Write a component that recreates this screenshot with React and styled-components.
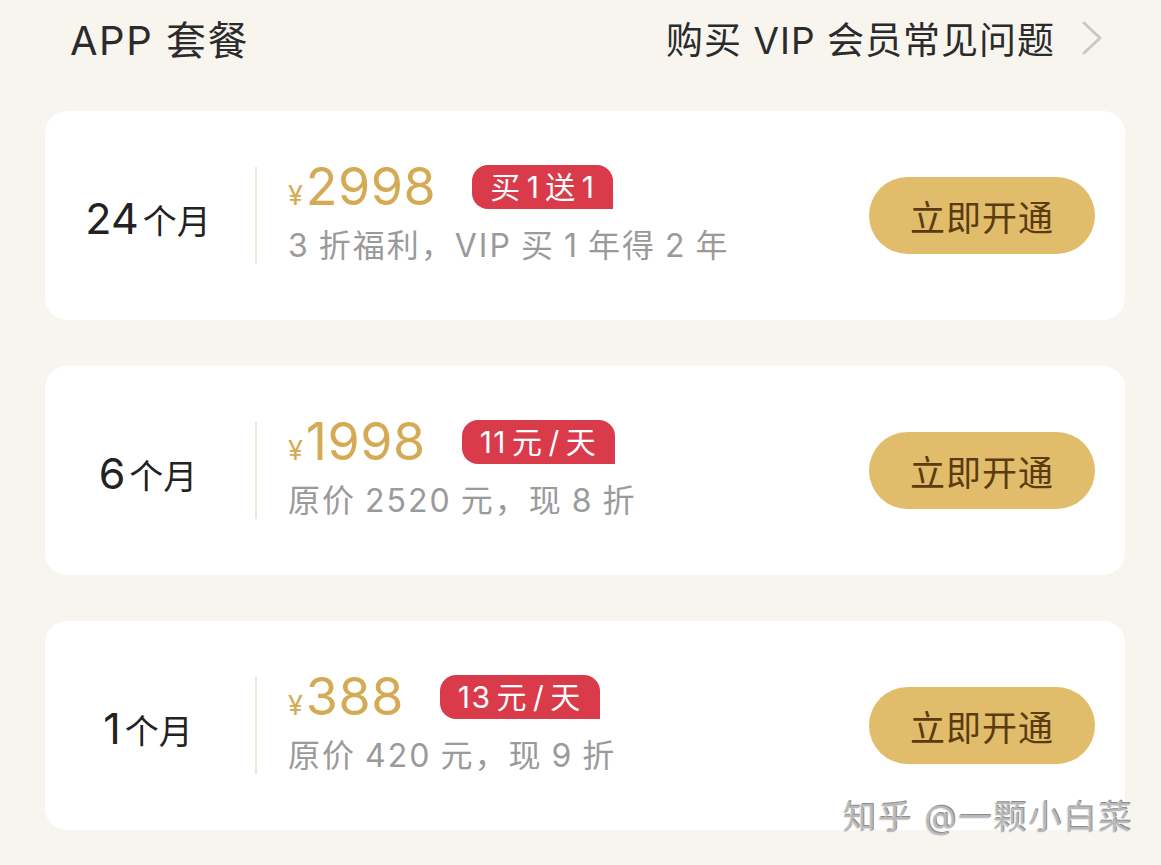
import React from 'react';
import styled, { createGlobalStyle } from 'styled-components';

const GlobalStyle = createGlobalStyle`
  html, body {
    margin: 0;
    padding: 0;
    background: #f8f5ef;
  }
  body {
    font-family: Inter, "Noto Sans CJK SC", sans-serif;
  }
`;

const Page = styled.div`
  width: 1161px;
  height: 865px;
  box-sizing: border-box;
  padding: 0 36px 0 45px;
  background: #f8f5ef;
  position: relative;
  overflow: hidden;
`;

const Header = styled.div`
  display: flex;
  align-items: center;
  justify-content: space-between;
  height: 76px;
  padding: 0 22px 0 25px;
  margin-bottom: 35px;
`;

const Title = styled.h1`
  margin: 0;
  font-size: 40px;
  font-weight: 400;
  color: #2b2b2b;
  letter-spacing: 1.5px;
`;

const FaqLink = styled.a`
  display: flex;
  align-items: center;
  gap: 26px;
  font-size: 37px;
  color: #2b2b2b;
  text-decoration: none;
  letter-spacing: 1px;
`;

const CardList = styled.div`
  display: flex;
  flex-direction: column;
  gap: 46px;
`;

const Card = styled.div`
  display: flex;
  align-items: center;
  height: 209px;
  background: #ffffff;
  border-radius: 22px;
`;

const Period = styled.div`
  width: 210px;
  display: flex;
  justify-content: center;
  align-items: baseline;
  color: #222;
  padding-top: 4px;
  padding-right: 4px;
  box-sizing: border-box;
`;

const PeriodNum = styled.span`
  font-size: 43px;
`;

const PeriodUnit = styled.span`
  font-size: 34px;
  margin-left: 4px;
`;

const Divider = styled.div`
  width: 2px;
  height: 97px;
  background: #efe6d2;
`;

const Info = styled.div`
  flex: 1;
  padding-left: 31px;
  display: flex;
  flex-direction: column;
  gap: 7px;
  margin-top: -4px;
`;

const PriceRow = styled.div`
  display: flex;
  align-items: center;
  gap: 36px;
`;

const Price = styled.div`
  color: #d4aa55;
  display: flex;
  align-items: baseline;
  line-height: 1;
`;

const Yen = styled.span`
  font-size: 27px;
  margin-right: 3px;
`;

const Amount = styled.span`
  font-size: 52px;
  letter-spacing: 0.5px;
`;

const Badge = styled.span`
  background: #d93b4b;
  color: #fff;
  font-size: 30px;
  line-height: 44px;
  height: 44px;
  padding: 0 18px;
  border-radius: 16px 16px 0 16px;
  letter-spacing: 1.5px;
  word-spacing: -5px;
`;

const Desc = styled.div`
  font-size: 32px;
  color: #9a9a9a;
  letter-spacing: 2px;
  word-spacing: -2px;
`;

const OpenButton = styled.button`
  width: 226px;
  height: 77px;
  margin-right: 30px;
  border: none;
  border-radius: 39px;
  background: #e1bc6a;
  color: #5a3b12;
  font-family: "Noto Sans CJK SC", sans-serif;
  font-size: 35px;
  letter-spacing: 1px;
  cursor: pointer;
`;

const Watermark = styled.div`
  position: absolute;
  right: 28px;
  bottom: 26px;
  font-size: 33px;
  color: #b8b8b8;
  text-shadow: -1px 1px 0 #ebebeb, 1px -1px 0 #8c8c8c;
  letter-spacing: 2px;
`;

const Chevron = () => (
  <svg width="22" height="34" viewBox="0 0 22 34" fill="none">
    <path d="M3 2 L19 17 L3 32" stroke="#c8c8c8" strokeWidth="3" strokeLinecap="round" strokeLinejoin="round" />
  </svg>
);

const plans = [
  { num: '24', price: '2998', badge: '买 1 送 1', desc: '3 折福利，VIP 买 1 年得 2 年' },
  { num: '6', price: '1998', badge: '11 元 / 天', desc: '原价 2520 元，现 8 折' },
  { num: '1', price: '388', badge: '13 元 / 天', desc: '原价 420 元，现 9 折' },
];

const App = () => (
  <Page>
    <GlobalStyle />
    <Header>
      <Title>APP 套餐</Title>
      <FaqLink href="#">
        购买 VIP 会员常见问题
        <Chevron />
      </FaqLink>
    </Header>
    <CardList>
      {plans.map(plan => (
        <Card key={plan.num}>
          <Period>
            <PeriodNum>{plan.num}</PeriodNum>
            <PeriodUnit>个月</PeriodUnit>
          </Period>
          <Divider />
          <Info>
            <PriceRow>
              <Price>
                <Yen>¥</Yen>
                <Amount>{plan.price}</Amount>
              </Price>
              <Badge>{plan.badge}</Badge>
            </PriceRow>
            <Desc>{plan.desc}</Desc>
          </Info>
          <OpenButton>立即开通</OpenButton>
        </Card>
      ))}
    </CardList>
    <Watermark>知乎 @一颗小白菜</Watermark>
  </Page>
);

export default App;
